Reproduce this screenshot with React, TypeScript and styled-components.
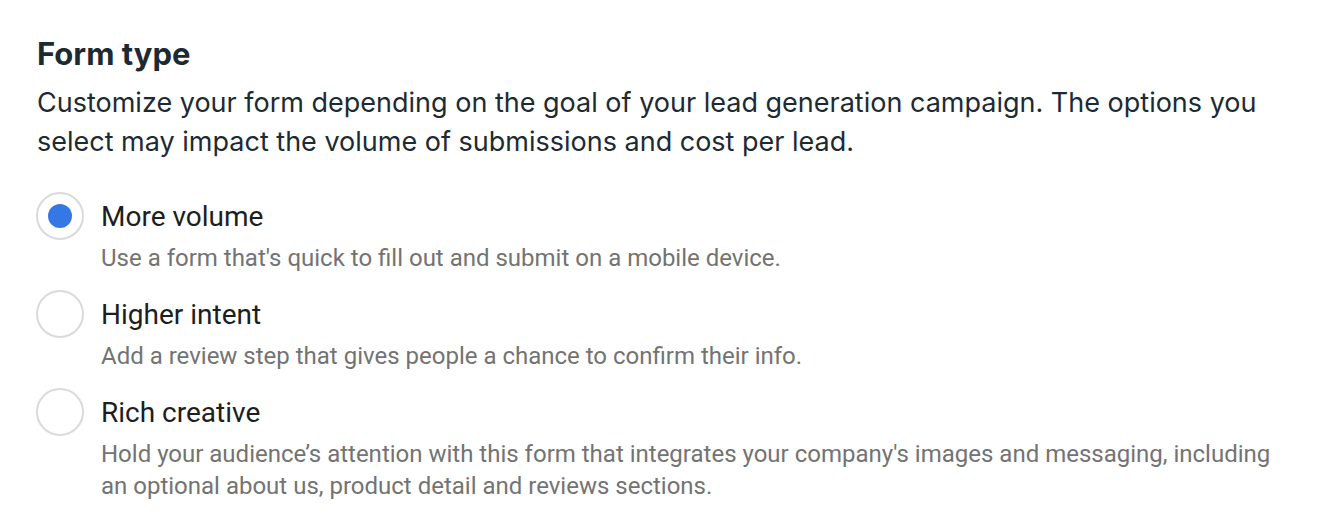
import { useState } from "react";
import { createGlobalStyle, styled } from "styled-components";

const GlobalStyle = createGlobalStyle`
  html, body {
    margin: 0;
    padding: 0;
    background: #ffffff;
  }
`;

const options = [
  {
    id: "volume",
    label: "More volume",
    hint: "Use a form that's quick to fill out and submit on a mobile device.",
  },
  {
    id: "intent",
    label: "Higher intent",
    hint: "Add a review step that gives people a chance to confirm their info.",
  },
  {
    id: "creative",
    label: "Rich creative",
    hint:
      "Hold your audience\u2019s attention with this form that integrates your company's images and messaging, including an optional about us, product detail and reviews sections.",
  },
];

export default function App() {
  const [selected, setSelected] = useState("volume");

  return (
    <>
      <GlobalStyle />
      <Wrapper>
        <Title>Form type</Title>
        <Description>
          Customize your form depending on the goal of your lead generation
          campaign. The options you select may impact the volume of submissions
          and cost per lead.
        </Description>
        <OptionList>
          {options.map((opt) => (
            <Option key={opt.id} onClick={() => setSelected(opt.id)}>
              <Radio $checked={selected === opt.id} />
              <OptionText>
                <Label>{opt.label}</Label>
                <Hint>{opt.hint}</Hint>
              </OptionText>
            </Option>
          ))}
        </OptionList>
      </Wrapper>
    </>
  );
}

const Wrapper = styled.div`
  width: 1250px;
  padding: 36px 0 0 36px;
  display: flex;
  flex-direction: column;
`;

const Title = styled.h2`
  margin: 0;
  padding-left: 1px;
  font-family: Inter, "Liberation Sans", sans-serif;
  font-size: 31px;
  font-weight: 700;
  line-height: 36px;
  color: #1c2b33;
`;

const Description = styled.p`
  margin: 11px 0 0;
  padding-left: 1px;
  font-family: Inter, "Liberation Sans", sans-serif;
  font-size: 27px;
  line-height: 39px;
  color: #1c2b33;
`;

const OptionList = styled.div`
  margin-top: 31px;
  display: flex;
  flex-direction: column;
  gap: 16px;
`;

const Option = styled.label`
  display: flex;
  flex-direction: row;
  align-items: flex-start;
  gap: 17px;
  cursor: pointer;
`;

const Radio = styled.span<{ $checked: boolean }>`
  flex-shrink: 0;
  box-sizing: border-box;
  width: 48px;
  height: 48px;
  border-radius: 50%;
  border: 2px solid #dadada;
  background: #ffffff;
  display: flex;
  align-items: center;
  justify-content: center;

  &::after {
    content: "";
    width: 24px;
    height: 24px;
    border-radius: 50%;
    background: #3578e5;
    display: ${(p) => (p.$checked ? "block" : "none")};
  }
`;

const OptionText = styled.div`
  display: flex;
  flex-direction: column;
  padding-top: 9px;
`;

const Label = styled.div`
  font-family: Roboto, "Liberation Sans", sans-serif;
  font-size: 28px;
  line-height: 32px;
  color: #1c1e21;
`;

const Hint = styled.div`
  margin-top: 9px;
  font-family: Roboto, "Liberation Sans", sans-serif;
  font-size: 24px;
  line-height: 32px;
  color: #737373;
`;
